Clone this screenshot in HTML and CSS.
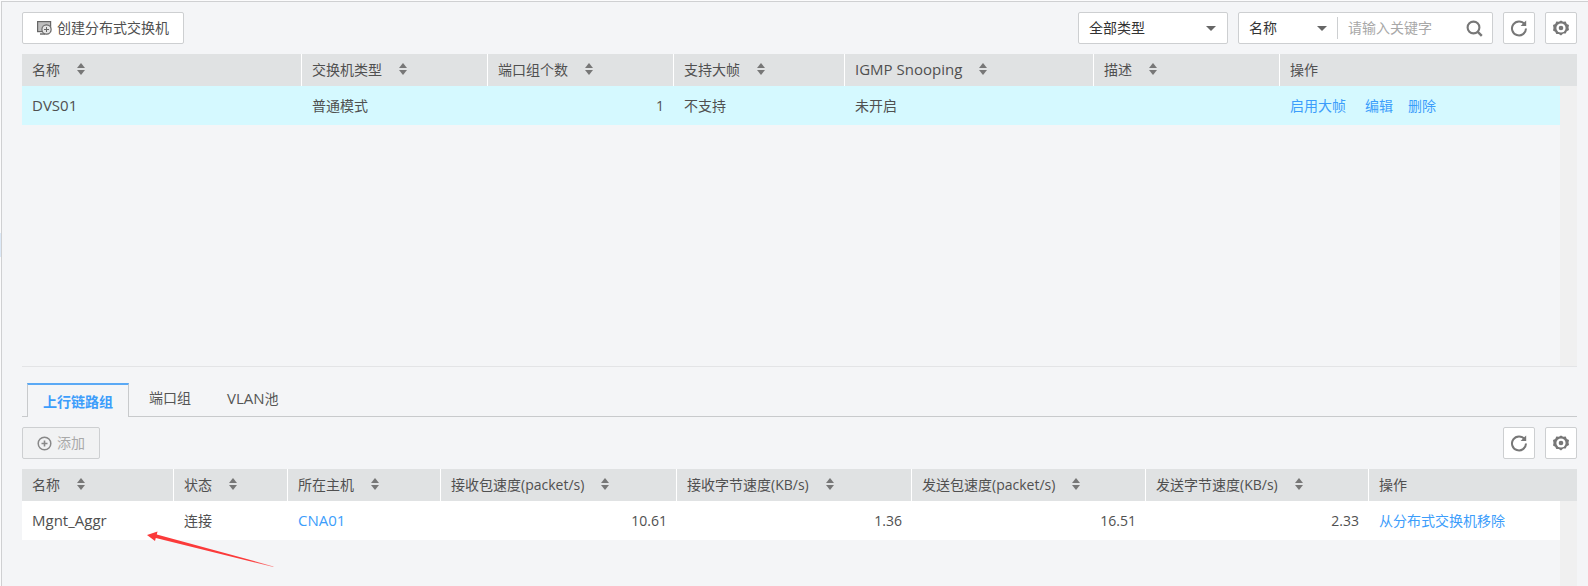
FILE: index.html
```html
<!DOCTYPE html>
<html lang="zh-CN">
<head>
    <meta charset="UTF-8">
    <title>分布式交换机</title>
    <link rel="stylesheet" href="styles.css">
</head>
<body>
    <svg class="hidden-defs" width="0" height="0">
        <symbol id="ic-refresh" viewBox="0 0 18 18">
            <path d="M14.600 5.200A7 7 0 1 0 16 9.500" fill="none" stroke="#777" stroke-width="2"/>
            <path d="M16.200 1.400V7h-5.600z" fill="#777"/>
        </symbol>
        <symbol id="ic-gear" viewBox="0 0 18 18">
            <path d="M9 .8l2.200 1.300 2.500-.2 1.100 2.300 2.200 1.200-.5 2.500.5 2.500-2.200 1.200-1.100 2.300-2.500-.2L9 15.900 6.800 14.200l-2.500.2-1.100-2.300L1 10.900l.5-2.500L1 5.400l2.200-1.200 1.100-2.300 2.500.2z" fill="#777" transform="translate(0 .7)"/>
            <circle cx="9" cy="9" r="4.600" fill="#fff"/>
            <circle cx="9" cy="9" r="2.300" fill="#777"/>
        </symbol>
    </svg>

    <div class="panel">
        <div class="toolbar">
            <button class="btn btn-create">
                <svg class="ic-create" width="15" height="14" viewBox="0 0 15 14">
                    <rect x=".6" y=".6" width="13" height="10" fill="#bdbdbd" stroke="#666" stroke-width="1.200"/>
                    <path d="M3 13h5" stroke="#666" stroke-width="1.400"/>
                    <circle cx="9.500" cy="8.500" r="4.600" fill="#e4e4e4" stroke="#666" stroke-width="1.100"/>
                    <path d="M9.500 6v5M7 8.500h5" stroke="#666"/>
                </svg>
                创建分布式交换机
            </button>
            <div class="spacer"></div>
            <div class="select select-type">全部类型<i class="caret"></i></div>
            <div class="search">
                <div class="search-field">名称<i class="caret"></i></div>
                <div class="search-input">请输入关键字</div>
                <svg class="ic-search" width="17" height="17" viewBox="0 0 17 17">
                    <circle cx="7.500" cy="7.500" r="5.900" fill="none" stroke="#777" stroke-width="2.100"/>
                    <path d="M11.800 11.800l4 4" stroke="#777" stroke-width="2.400"/>
                </svg>
            </div>
            <button class="btn-icon"><svg width="18" height="18"><use href="#ic-refresh"/></svg></button>
            <button class="btn-icon"><svg width="18" height="18"><use href="#ic-gear"/></svg></button>
        </div>

        <div class="grid grid-dvs grid-head">
            <div class="th">名称<span class="sort"></span></div>
            <div class="th">交换机类型<span class="sort"></span></div>
            <div class="th">端口组个数<span class="sort"></span></div>
            <div class="th">支持大帧<span class="sort"></span></div>
            <div class="th"><span class="latin">IGMP Snooping</span><span class="sort"></span></div>
            <div class="th">描述<span class="sort"></span></div>
            <div class="th">操作</div>
        </div>
        <div class="table-body table-body-top">
            <div class="rows">
                <div class="grid grid-dvs row row-selected">
                    <div class="td latin">DVS01</div>
                    <div class="td">普通模式</div>
                    <div class="td num">1</div>
                    <div class="td">不支持</div>
                    <div class="td">未开启</div>
                    <div class="td"></div>
                    <div class="td actions"><a>启用大帧</a><a>编辑</a><a>删除</a></div>
                </div>
            </div>
            <div class="track"></div>
        </div>

        <div class="tabs">
            <div class="tab tab-active">上行链路组</div>
            <div class="tab">端口组</div>
            <div class="tab"><span class="latin">VLAN</span>池</div>
        </div>

        <div class="toolbar toolbar-sub">
            <button class="btn btn-add" disabled>
                <svg width="15" height="15" viewBox="0 0 15 15">
                    <circle cx="7.500" cy="7.500" r="6.300" fill="none" stroke="#888" stroke-width="1.500"/>
                    <path d="M7.500 4.500v6M4.500 7.500h6" stroke="#888" stroke-width="1.600"/>
                </svg>
                添加
            </button>
            <div class="spacer"></div>
            <button class="btn-icon"><svg width="18" height="18"><use href="#ic-refresh"/></svg></button>
            <button class="btn-icon"><svg width="18" height="18"><use href="#ic-gear"/></svg></button>
        </div>

        <div class="grid grid-uplink grid-head">
            <div class="th">名称<span class="sort"></span></div>
            <div class="th">状态<span class="sort"></span></div>
            <div class="th">所在主机<span class="sort"></span></div>
            <div class="th">接收包速度(packet/s)<span class="sort"></span></div>
            <div class="th">接收字节速度(KB/s)<span class="sort"></span></div>
            <div class="th">发送包速度(packet/s)<span class="sort"></span></div>
            <div class="th">发送字节速度(KB/s)<span class="sort"></span></div>
            <div class="th">操作</div>
        </div>
        <div class="table-body table-body-bottom">
            <div class="rows">
                <div class="grid grid-uplink row">
                    <div class="td latin">Mgnt_Aggr</div>
                    <div class="td">连接</div>
                    <div class="td"><a class="latin">CNA01</a></div>
                    <div class="td num">10.61</div>
                    <div class="td num">1.36</div>
                    <div class="td num">16.51</div>
                    <div class="td num">2.33</div>
                    <div class="td"><a>从分布式交换机移除</a></div>
                </div>
            </div>
            <div class="track"></div>
        </div>
    </div>

    <!-- red annotation arrow drawn over the screenshot -->
    <svg class="arrow" width="140" height="45" viewBox="0 0 140 45">
        <defs>
            <linearGradient id="arrowFade" x1="0" y1="0" x2="1" y2="0">
                <stop offset="0" stop-color="#fb3a3a"/>
                <stop offset=".8" stop-color="#fb3a3a"/>
                <stop offset="1" stop-color="#fb3a3a" stop-opacity=".6"/>
            </linearGradient>
        </defs>
        <path d="M7 10L17.500 6.500 16.800 9.500 133.500 41.400 133.300 42 15.800 13 15 16z" fill="url(#arrowFade)"/>
    </svg>
    <div class="edge-mark"></div>
</body>
</html>
```

FILE: styles.css
```css
* {
    box-sizing: border-box;
}

html, body {
    height: 586px;
}

body {
    margin: 0;
    padding: 1px 0 0 1px;
    overflow: hidden;
    position: relative;
    background-color: #fbfbfc;
    color: #505050;
    font-family: "Open Sans", "Noto Sans CJK SC", sans-serif;
    font-size: 14px;
}

a {
    color: #3c9dfb;
}

button {
    font-family: inherit;
    font-size: 14px;
}

.latin {
    font-size: 15px;
}

.hidden-defs {
    position: absolute;
}

.panel {
    height: 585px;
    display: flex;
    flex-direction: column;
    padding: 10px 11px 0 20px;
    background-color: #f4f5f7;
    border-top: 1px solid #cfd0d2;
    border-left: 1px solid #cfd0d2;
}

.toolbar {
    display: flex;
    align-items: stretch;
    height: 32px;
    gap: 10px;
    flex: none;
}

.spacer {
    flex: 1;
}

.btn {
    display: flex;
    align-items: center;
    justify-content: center;
    height: 32px;
    padding: 0 0 2px;
    color: #505050;
    background-color: #fff;
    border: 1px solid #cdcfd1;
    border-radius: 2px;
}

.btn svg {
    margin-top: 2px;
}

.btn-create {
    width: 162px;
    gap: 5px;
}

.btn-add {
    width: 78px;
    gap: 5px;
    color: #a9a9a9;
    background-color: #f1f2f3;
}

.btn-icon {
    display: flex;
    align-items: center;
    justify-content: center;
    width: 32px;
    height: 32px;
    padding: 0;
    background-color: #fff;
    border: 1px solid #cdcfd1;
    border-radius: 2px;
}

.select,
.search {
    display: flex;
    align-items: center;
    background-color: #fff;
    border: 1px solid #cdcfd1;
    border-radius: 2px;
}

.select-type {
    width: 150px;
    padding: 0 11px 2px 10px;
    justify-content: space-between;
    color: #333;
}

.search {
    width: 255px;
}

.search-field {
    display: flex;
    align-items: center;
    justify-content: space-between;
    width: 99px;
    height: 22px;
    padding: 0 10px 2px;
    border-right: 1px solid #cdcfd1;
    color: #333;
}

.search-input {
    flex: 1;
    padding: 0 0 2px 10px;
    color: #a8a8a8;
}

.ic-search {
    margin-right: 9px;
}

.caret {
    width: 0;
    height: 0;
    margin-top: 2px;
    border-left: 5px solid transparent;
    border-right: 5px solid transparent;
    border-top: 5px solid #666;
}

.grid {
    display: grid;
}

.grid-dvs {
    grid-template-columns: 280px 186px 186px 171px 249px 186px 1fr;
}

.grid-uplink {
    grid-template-columns: 152px 114px 153px 236px 235px 234px 223px 1fr;
}

.grid-head {
    flex: none;
    height: 32px;
    margin-top: 10px;
    background-color: #e0e2e3;
}

.th {
    display: flex;
    align-items: center;
    padding: 0 0 2px 10px;
    border-right: 1px solid #fff;
}

.th:last-child {
    border-right: none;
}

.sort {
    display: flex;
    flex-direction: column;
    gap: 2px;
    margin-left: 17px;
}

.sort::before,
.sort::after {
    content: "";
    width: 0;
    height: 0;
    border-left: 4.5px solid transparent;
    border-right: 4.5px solid transparent;
}

.sort::before {
    border-bottom: 5.5px solid #777;
}

.sort::after {
    border-top: 5.5px solid #777;
}

.table-body {
    display: flex;
    flex: none;
}

.table-body-top {
    height: 281px;
    border-bottom: 1px solid #e3e4e6;
}

.table-body-bottom {
    flex: 1;
}

.rows {
    flex: 1;
}

.track {
    width: 17px;
    background-color: #f0f0f0;
}

.row {
    height: 39px;
    background-color: #fff;
}

.row-selected {
    background-color: #d5f9ff;
}

.td {
    display: flex;
    align-items: center;
    padding: 0 10px 1px;
}

.num {
    justify-content: flex-end;
}

.actions {
    gap: 19px;
}

.actions a + a + a {
    margin-left: -4px;
}

.tabs {
    display: flex;
    flex: none;
    gap: 4px;
    height: 50px;
    padding: 16px 0 0 5px;
    border-bottom: 1px solid #c8cacc;
}

.tab {
    height: 33px;
    padding: 0 16px;
    line-height: 30px;
    color: #555;
}

.tab-active {
    height: 34px;
    padding: 0 15px;
    line-height: 33px;
    color: #3c9dfb;
    font-weight: 600;
    background-color: #f4f5f7;
    border: 1px solid #c8cacc;
    border-top: 2px solid #5aa9f5;
    border-bottom: none;
}

.toolbar-sub {
    margin-top: 10px;
}

.arrow {
    position: absolute;
    left: 140px;
    top: 525px;
}

.edge-mark {
    position: absolute;
    left: 0;
    top: 233px;
    width: 1px;
    height: 24px;
    background-color: #dce9f8;
}
```
